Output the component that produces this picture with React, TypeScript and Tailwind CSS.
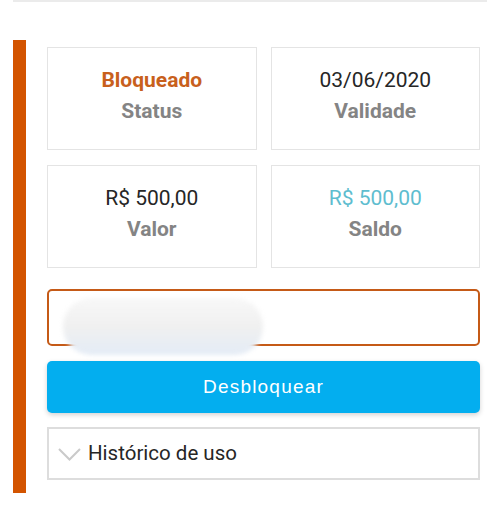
function InfoCard({ value, label, valueClass }: { value: string; label: string; valueClass: string }) {
  return (
    <div className="h-[103px] border border-[#e4e4e4] bg-white flex flex-col items-center pt-[17px]">
      <span className={`text-[21px] leading-[31px] ${valueClass}`}>{value}</span>
      <span className="text-[21px] leading-[31px] font-bold text-[#848484]">{label}</span>
    </div>
  );
}

export default function App() {
  return (
    <div className="w-[500px] h-[526px] bg-white px-[13px]" style={{ fontFamily: "Roboto, 'Noto Sans', sans-serif" }}>
      <div className="h-[2px] bg-[#ebebeb]" />
      <div className="mt-[38px] flex">
        <div className="w-[13px] bg-[#d35400]" />
        <div className="ml-[21px] w-[433px] pt-[7px] pb-[13px]">
          <div className="grid grid-cols-2 gap-x-[14px] gap-y-[15px]">
            <InfoCard value="Bloqueado" label="Status" valueClass="font-bold text-[#c8601c]" />
            <InfoCard value="03/06/2020" label="Validade" valueClass="text-[#262626]" />
            <InfoCard value="R$ 500,00" label="Valor" valueClass="text-[#262626]" />
            <InfoCard value="R$ 500,00" label="Saldo" valueClass="text-[#5ebdcf]" />
          </div>

          <div className="relative mt-[21px] h-[57px] rounded-[5px] border-2 border-[#c55a17] bg-white">
            <div className="absolute left-[14px] top-[7px] w-[200px] h-[57px] rounded-[28px] bg-gradient-to-b from-[#f8f8f8] via-[#f0f0f0] to-[#e4ecf6] blur-[2px]" />
          </div>

          <button
            className="mt-[15px] w-full h-[52px] rounded-[5px] bg-[#03aeef] text-white text-[19px] tracking-[1.2px] shadow-[0_2px_5px_rgba(0,0,0,0.18)]"
            style={{ fontFamily: "'Liberation Sans', Arial, sans-serif" }}
          >
            Desbloquear
          </button>

          <div className="mt-[14px] h-[53px] border-2 border-[#dddddd] flex items-center pl-[9px]">
            <svg width="23" height="13" viewBox="0 0 23 13" fill="none" className="mt-[2px]">
              <polyline points="1,1 11.5,11.5 22,1" stroke="#cacaca" strokeWidth="2" />
            </svg>
            <span className="ml-[7px] text-[20.5px] text-[#262626]">Histórico de uso</span>
          </div>
        </div>
      </div>
    </div>
  );
}
